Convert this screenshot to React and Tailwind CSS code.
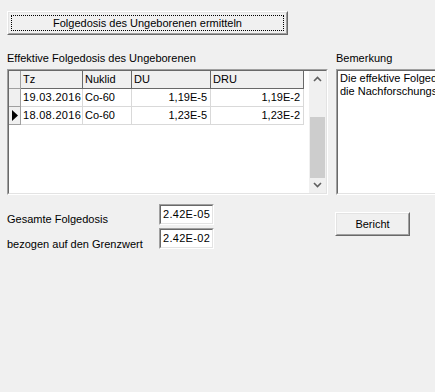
import React from "react";

const font = { fontFamily: '"Liberation Sans", Arial, sans-serif' };

function Btn3D({ className = "", children, focus = false }) {
  return (
    <div
      className={`relative border border-t-white border-l-white border-r-[#696969] border-b-[#696969] bg-[#f0f0f0] ${className}`}
    >
      <div className="absolute inset-0 border border-t-[#e3e3e3] border-l-[#e3e3e3] border-r-[#a0a0a0] border-b-[#a0a0a0]" />
      {focus && (
        <div className="absolute left-[3px] right-[3px] top-[3px] bottom-[3px] border border-dotted border-black" />
      )}
      <div className="relative flex h-full items-center justify-center text-[11px] text-black">
        {children}
      </div>
    </div>
  );
}

function Sunken({ className = "", children }) {
  return (
    <div
      className={`border border-t-[#a0a0a0] border-l-[#a0a0a0] border-r-white border-b-white ${className}`}
    >
      <div className="h-full w-full border border-t-[#696969] border-l-[#696969] border-r-[#e3e3e3] border-b-[#e3e3e3] bg-white overflow-hidden">
        {children}
      </div>
    </div>
  );
}

const rows = [
  { tz: "19.03.2016", n: "Co-60", du: "1,19E-5", dru: "1,19E-2", cur: false },
  { tz: "18.08.2016", n: "Co-60", du: "1,23E-5", dru: "1,23E-2", cur: true },
];

export default function App() {
  return (
    <div
      className="w-[435px] h-[392px] bg-[#f0f0f0] text-[11px] text-black overflow-hidden pt-[11px] pl-[7px]"
      style={font}
    >
      <Btn3D className="w-[281px] h-[24px]" focus>
        Folgedosis des Ungeborenen ermitteln
      </Btn3D>

      <div className="flex mt-[17px]">
        <div className="w-[321px] shrink-0">
          <div className="h-[14px] leading-[14px] -mt-[1px]">Effektive Folgedosis des Ungeborenen</div>
          <Sunken className="mt-[4px] h-[126px]">
            <div className="flex h-full">
              <div className="flex-1 bg-white">
                <div className="flex h-[18px] bg-[#f0f0f0] w-[295px]">
                  <div className="w-[12px] border-r border-b border-[#a0a0a0]" />
                  <div className="w-[62px] border-r border-b border-[#696969] pl-[2px] leading-[17px]">Tz</div>
                  <div className="w-[49px] border-r border-b border-[#696969] pl-[2px] leading-[17px]">Nuklid</div>
                  <div className="w-[79px] border-r border-b border-[#696969] pl-[2px] leading-[17px]">DU</div>
                  <div className="w-[93px] border-r border-b border-[#696969] pl-[2px] leading-[17px]">DRU</div>
                </div>
                {rows.map((r, i) => (
                  <div key={i} className="flex h-[18px] w-[295px]">
                    <div className="w-[12px] bg-[#f0f0f0] border-r border-b border-[#a0a0a0] flex items-center justify-center">
                      {r.cur && (
                        <svg width="6" height="11" viewBox="0 0 6 11">
                          <path d="M0 0 L6 5.5 L0 11 Z" fill="#000" />
                        </svg>
                      )}
                    </div>
                    <div className="w-[62px] border-r border-b border-[#d9d9d9] pl-[2px] leading-[17px] tracking-[0.3px]">{r.tz}</div>
                    <div className="w-[49px] border-r border-b border-[#d9d9d9] pl-[2px] leading-[17px]">{r.n}</div>
                    <div className="w-[79px] border-r border-b border-[#d9d9d9] pr-[3px] text-right leading-[17px]">{r.du}</div>
                    <div className="w-[93px] border-r border-b border-[#d9d9d9] pr-[3px] text-right leading-[17px]">{r.dru}</div>
                  </div>
                ))}
              </div>
              <div className="w-[17px] shrink-0 h-full bg-[#f0f0f0] flex flex-col">
                <div className="h-[17px] flex items-center justify-center">
                  <svg width="9" height="6" viewBox="0 0 9 6">
                    <path d="M1 5 L4.5 1.5 L8 5" stroke="#606060" strokeWidth="1.6" fill="none" />
                  </svg>
                </div>
                <div className="flex-1 flex flex-col">
                  <div className="h-[30px]" />
                  <div className="h-[61px] mx-[1px] bg-[#cdcdcd]" />
                  <div className="flex-1" />
                </div>
                <div className="h-[17px] flex items-center justify-center">
                  <svg width="9" height="6" viewBox="0 0 9 6">
                    <path d="M1 1 L4.5 4.5 L8 1" stroke="#606060" strokeWidth="1.6" fill="none" />
                  </svg>
                </div>
              </div>
            </div>
          </Sunken>
        </div>

        <div className="ml-[8px] w-[120px] shrink-0">
          <div className="h-[14px] leading-[14px] -mt-[1px]">Bemerkung</div>
          <Sunken className="mt-[4px] h-[126px] w-[120px]">
            <div className="pl-[2px] pt-[1px] leading-[13px] whitespace-nowrap">
              <div>Die effektive Folgedosis des Ungeborenen</div>
              <div>die Nachforschungsschwelle</div>
            </div>
          </Sunken>
        </div>
      </div>

      <div className="flex mt-[9px]">
        <div className="w-[152px] shrink-0 flex flex-col">
          <div className="h-[14px] leading-[14px] mt-[8px]">Gesamte Folgedosis</div>
          <div className="h-[14px] leading-[14px] mt-[11px]">bezogen auf den Grenzwert</div>
        </div>
        <div className="flex flex-col gap-[3px] shrink-0">
          <Sunken className="w-[55px] h-[21px]">
            <div className="pl-[2px] leading-[17px] tracking-[0.3px]">2.42E-05</div>
          </Sunken>
          <Sunken className="w-[55px] h-[21px]">
            <div className="pl-[2px] leading-[17px] tracking-[0.3px]">2.42E-02</div>
          </Sunken>
        </div>
        <Btn3D className="ml-[121px] mt-[8px] w-[75px] h-[24px] shrink-0">Bericht</Btn3D>
      </div>
    </div>
  );
}
